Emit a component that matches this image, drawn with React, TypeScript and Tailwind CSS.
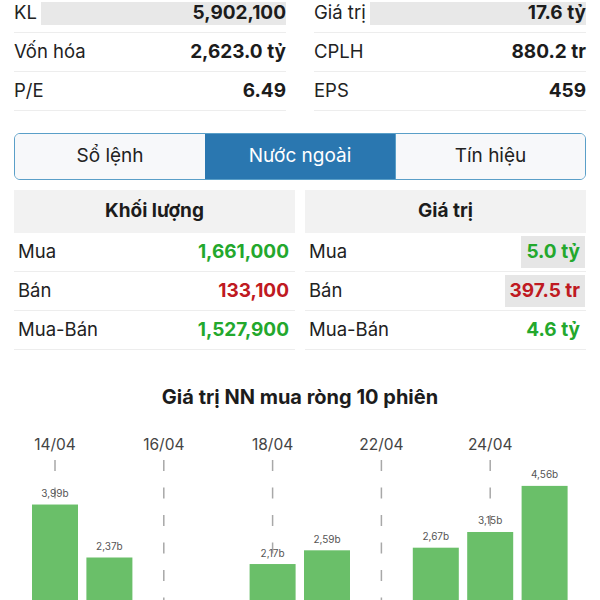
import React from "react";

const stats = [
  [
    { label: "KL", value: "5,902,100", flash: true },
    { label: "Vốn hóa", value: "2,623.0 tỷ" },
    { label: "P/E", value: "6.49" },
  ],
  [
    { label: "Giá trị", value: "17.6 tỷ", flash: true },
    { label: "CPLH", value: "880.2 tr" },
    { label: "EPS", value: "459" },
  ],
];

const tabs = ["Sổ lệnh", "Nước ngoài", "Tín hiệu"];

const foreign = [
  {
    title: "Khối lượng",
    rows: [
      { label: "Mua", value: "1,661,000", color: "text-[#23a82d]" },
      { label: "Bán", value: "133,100", color: "text-[#bf1a22]" },
      { label: "Mua-Bán", value: "1,527,900", color: "text-[#23a82d]" },
    ],
  },
  {
    title: "Giá trị",
    rows: [
      { label: "Mua", value: "5.0 tỷ", color: "text-[#23a82d]", flash: true },
      { label: "Bán", value: "397.5 tr", color: "text-[#bf1a22]", flash: true },
      { label: "Mua-Bán", value: "4.6 tỷ", color: "text-[#23a82d]" },
    ],
  },
];

// net foreign buy value per session, billions (negatives fall below the visible area)
const sessions = [3.99, 2.37, -1.2, -0.8, 2.17, 2.59, -0.5, 2.67, 3.15, 4.56];
const dates = ["14/04", "16/04", "18/04", "22/04", "24/04"];

function NetChart() {
  const top = 409;
  const base = 635;
  const scale = 32.7;
  const cx = (i: number) => 55 + i * 54.4;

  return (
    <svg width={600} height={191} viewBox={`0 ${top} 600 191`} className="block">
      {dates.map((d, k) => (
        <g key={d}>
          <text x={cx(k * 2)} y={450} textAnchor="middle" fontSize={15.5} fill="#444">
            {d}
          </text>
          <line
            x1={cx(k * 2)}
            x2={cx(k * 2)}
            y1={460}
            y2={620}
            stroke="#a8a8a8"
            strokeWidth={1.5}
            strokeDasharray="11 16.5"
          />
        </g>
      ))}
      {sessions.map((v, i) =>
        v > 0 ? (
          <g key={i}>
            <rect x={cx(i) - 23} y={base - v * scale} width={46} height={v * scale} fill="#6abf69" />
            <text
              x={cx(i)}
              y={base - v * scale - 7.5}
              textAnchor="middle"
              fontSize={10}
              fill="#555"
            >
              {v.toFixed(2).replace(".", ",")}b
            </text>
          </g>
        ) : null
      )}
    </svg>
  );
}

export default function App() {
  return (
    <div className="w-[600px] h-[600px] overflow-hidden bg-white font-['Inter','Liberation_Sans',sans-serif] text-[#1c1c1c]">
      <div className="grid grid-cols-2 gap-[28px] px-[14px] -mt-[6px]">
        {stats.map((col, c) => (
          <div key={c} className="flex flex-col">
            {col.map((s) => (
              <div key={s.label} className="h-[39px] flex items-center border-b border-[#ededed]">
                <span className="text-[18.5px] text-[#222]">{s.label}</span>
                <div
                  className={`flex-1 ml-1 h-[23px] flex items-center justify-end text-[19px] font-bold ${
                    s.flash ? "bg-[#e8e8e8]" : ""
                  }`}
                >
                  {s.value}
                </div>
              </div>
            ))}
          </div>
        ))}
      </div>

      <div className="mx-[14px] mt-[22px] h-[47px] grid grid-cols-3 rounded-md border border-[#5a9fc8] overflow-hidden">
        {tabs.map((t, i) => (
          <div
            key={t}
            className={`flex items-center justify-center text-[19px] ${
              i === 1 ? "bg-[#2a77b0] text-white" : "bg-[#f7f8fa] text-[#222]"
            } ${i === 2 ? "border-l border-[#5a9fc8]" : ""}`}
          >
            {t}
          </div>
        ))}
      </div>

      <div className="grid grid-cols-2 gap-[10px] px-[14px] mt-[10px]">
        {foreign.map((col) => (
          <div key={col.title} className="flex flex-col">
            <div className="h-[43px] bg-[#f2f2f2] flex items-center justify-center text-[19px] font-bold">
              {col.title}
            </div>
            {col.rows.map((r) => (
              <div
                key={r.label}
                className="h-[39px] flex items-center justify-between pl-[4px] pr-[1px] border-b border-[#ededed]"
              >
                <span className="text-[18.5px] text-[#222]">{r.label}</span>
                <span
                  className={`h-[32px] px-[5px] flex items-center text-[19px] font-bold ${r.color} ${
                    r.flash ? "bg-[#e6e6e6]" : ""
                  }`}
                >
                  {r.value}
                </span>
              </div>
            ))}
          </div>
        ))}
      </div>

      <div className="pt-[35px] text-center text-[20px] leading-[24px] font-bold">
        Giá trị NN mua ròng 10 phiên
      </div>
      <NetChart />
    </div>
  );
}
